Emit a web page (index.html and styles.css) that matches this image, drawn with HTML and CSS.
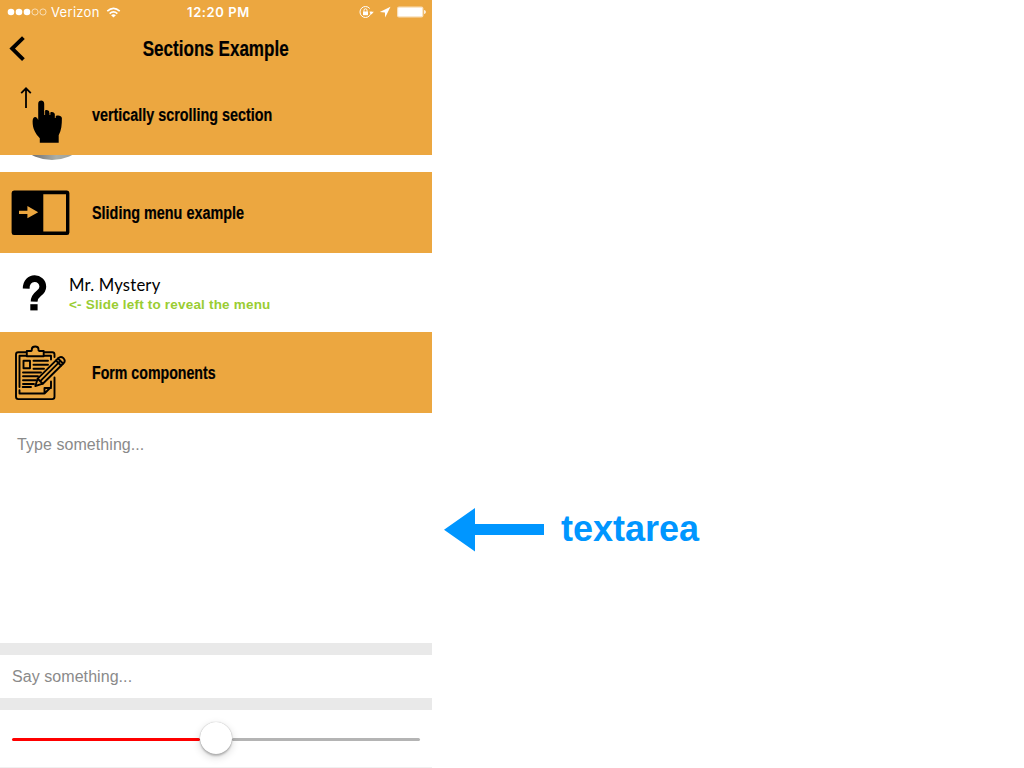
FILE: index.html
```
<!DOCTYPE html>
<html lang="en">
<head>
<meta charset="utf-8">
<title>Sections Example</title>
<link rel="stylesheet" href="styles.css">
</head>
<body>
<div class="page">
  <main class="phone">
    <header class="header">
      <div class="status">
        <div class="carrier">
          <svg width="40" height="10" viewBox="0 0 40 10"><g fill="#fff"><circle cx="4" cy="5" r="3.3"/><circle cx="12" cy="5" r="3.3"/><circle cx="20" cy="5" r="3.3"/></g><g fill="none" stroke="#fff" stroke-width=".6"><circle cx="28" cy="5" r="3.1"/><circle cx="36" cy="5" r="3.1"/></g></svg>
          <span class="carrier-name">Verizon</span>
          <svg class="wifi" width="15" height="11" viewBox="0 0 16 12"><g fill="none" stroke="#fff" stroke-width="1.8"><path d="M1.2 4.6Q8-1.6 14.8 4.6"/><path d="M3.8 7.2Q8 3.4 12.2 7.2"/></g><path d="M5.4 8.9Q8 6.8 10.6 8.9L8 11.4Z" fill="#fff"/></svg>
        </div>
        <span class="clock">12:20 PM</span>
        <svg class="indicators" width="68" height="16" viewBox="0 0 68 16">
          <circle cx="7.5" cy="8" r="5.5" fill="none" stroke="#fff" stroke-width="1" stroke-dasharray="30 3"/>
          <path d="M11.2 7.8h4.6l-2.3 2.6z" fill="#fff"/>
          <path d="M5 7.5h5v3.7H5z" fill="#fff"/><path d="M6 7.8V6.3a1.5 1.5 0 0 1 3 0v1.5" fill="none" stroke="#fff"/>
          <path d="M32.5 2.7L21.8 8.1l5.1.4.3 5.1z" fill="#fff"/>
          <rect x="39" y="2.5" width="26.4" height="11" rx="2" fill="#f8dfb9"/>
          <rect x="40.2" y="3.7" width="24" height="8.6" rx=".8" fill="#fff"/>
          <path d="M66.2 6c2.1.7 2.1 3.3 0 4z" fill="#fff"/>
        </svg>
      </div>
      <div class="navbar">
        <svg class="back" width="18" height="26" viewBox="0 0 18 26"><path d="M15.4 2.6L4.2 13.6l11.2 11" fill="none" stroke="#000" stroke-width="3.9"/></svg>
        <h1 class="title">Sections Example</h1>
      </div>
    </header>

    <section class="section first">
      <svg class="icon" width="70" height="80" viewBox="0 75 70 80">
        <path d="M26 108V89M21.2 93.2L26 88.3l4.8 4.9" fill="none" stroke="#000" stroke-width="1.8"/>
        <path d="M38.2 103.8c0-4.4 6-4.4 6 0v7.8c.5-2.4 5.2-2.2 5.4 1.1v.6c.8-2.2 5.2-1.8 5.4 1.3v2.4c1-2.2 6.8-2 6.9 1.3 0 6-.4 12-3.2 17v7.5H39.8v-4.5c-4-4.3-7.3-9.1-7.2-17 0-4.7 3.9-6 5.6-1.2z" fill="#000"/>
        <path d="M44.6 110v5M49.9 110v5M55.3 112v6" stroke="#eca740" stroke-width=".8"/>
      </svg>
      <h2 class="heading vertical">vertically scrolling section</h2>
    </section>
    <div class="peek"><div class="avatar"></div></div>

    <section class="section sliding">
      <svg class="icon" width="70" height="80" viewBox="0 172.5 70 80">
        <path fill-rule="evenodd" d="M14 190H67Q69.4 190 69.4 192.5V232Q69.4 234.5 67 234.5H14Q11.6 234.5 11.6 232V192.5Q11.6 190 14 190ZM43.3 193.8V231H66V193.8ZM19 210.3V213.5H27.4V217.8L38.2 211.7 27.4 205.6V210.3Z"/>
      </svg>
      <h2 class="heading slide">Sliding menu example</h2>
    </section>

    <div class="row">
      <div class="mystery"><svg width="69" height="46" viewBox="0 269.4 69 46"><path d="M26.2 288C26.3 274.5 42.8 275.7 42.8 286.1C42.8 293.5 34.3 292.2 34.1 301" fill="none" stroke="#000" stroke-width="6.8"/><path d="M30.3 303.6h7.3v6.2h-7.3z"/></svg></div>
      <div class="person">
        <div class="name">Mr. Mystery</div>
        <div class="hint">&lt;- Slide left to reveal the menu</div>
      </div>
    </div>

    <section class="section forms">
      <svg class="icon" width="70" height="80" viewBox="0 332.5 70 80">
        <g fill="none" stroke="#000" stroke-width="1.9" stroke-linejoin="round" stroke-linecap="round">
          <path d="M26 351.7H18.3Q16 351.7 16 354V396.3Q16 398.6 18.3 398.6H52.2Q54.5 398.6 54.5 396.3V377M54.5 356.5V354Q54.5 351.7 52.2 351.7H44.5"/>
          <path d="M26.8 355.8V350.5H31.2C32 350.5 31.8 349 31.8 348.5C32.3 345.2 38.1 345.2 38.5 348.5C38.5 349.5 38.3 350.5 39.3 350.5H43.7V355.8Z"/>
          <path d="M26 355.2H19.5V386.5M19.5 389.7V393H44.5L51 386.5V381M44.5 393V387.5H51M44.5 355.2H51V359"/>
          <path d="M23.5 360.3H30V367.8H23.5ZM33.5 360.3H48M33.5 364.2H48M33.5 368.2H44M23 372H41M23 375.8H38M23 379.7H36M23 383.5H34M22.7 386.5H31"/>
          <path fill="#eca740" d="M35.3 385.5L37.7 378.2L58.3 357.6Q60.8 355.2 63.4 357.6Q66 360.2 63.5 362.8L42.8 383.2Z"/>
          <path d="M37.7 378.2L42.8 383.2M40.3 380.6L59.2 361.6M56 360L61 365M58 358L63 363"/>
        </g>
      </svg>
      <h2 class="heading form">Form components</h2>
    </section>

    <div class="textarea">Type something...</div>
    <div class="divider"></div>
    <div class="input">Say something...</div>
    <div class="divider"></div>
    <div class="slider">
      <div class="track filled"></div>
      <div class="knob"></div>
      <div class="track empty"></div>
    </div>
  </main>

  <aside class="callout">
    <svg width="101" height="44" viewBox="0 0 101 44"><path d="M0 21.7L31 0V16H100V27H31V43.4Z" fill="#0096ff"/></svg>
    <span class="callout-text">textarea</span>
  </aside>
</div>
</body>
</html>
```

FILE: styles.css
```
* { box-sizing: border-box; }
body { margin: 0; background: #fff; font-family: "Liberation Sans", Arial, sans-serif; color: #000; }
svg { display: block; flex: none; }
h1, h2 { margin: 0; }
.page { display: flex; width: 1024px; height: 768px; overflow: hidden; }
.phone { width: 432px; height: 768px; flex: none; display: flex; flex-direction: column; border-bottom: 1px solid #f0f0f0; }
.phone > * { flex: none; }
.header { height: 75px; background: #eca740; }
.status { height: 24px; display: grid; grid-template-columns: 1fr auto 1fr; align-items: center; padding: 0 6px 0 7px; color: #fff; font-family: Inter, sans-serif; }
.carrier { display: flex; align-items: center; }
.carrier-name { font-size: 13px; line-height: 24px; letter-spacing: .3px; margin-left: 4px; width: 50px; white-space: nowrap; }
.wifi { margin-left: 5px; }
.clock { font-size: 13px; font-weight: 600; line-height: 24px; letter-spacing: .6px; margin-left: 4px; }
.indicators { justify-self: end; }
.navbar { height: 48px; display: grid; grid-template-columns: 60px 1fr 60px; align-items: center; }
.back { margin-left: 8px; }
.title { font-size: 21.5px; line-height: 28px; padding-top: 1px; text-align: center; transform: translateX(-.3px) scaleX(.793); white-space: nowrap; -webkit-text-stroke: .2px #000; }
.section { background: #eca740; display: flex; align-items: center; }
.icon { margin-right: 22px; }
.heading { font-size: 18px; line-height: 24px; padding-top: 1px; white-space: nowrap; transform-origin: left center; -webkit-text-stroke: .2px #000; }
.vertical { padding-top: 0; transform: scaleX(.797); }
.slide { transform: scaleX(.8); }
.form { transform: scaleX(.787); }
.first { height: 80px; }
.peek { height: 17.4px; padding-left: 9px; overflow: hidden; display: flex; align-items: flex-start; }
.avatar { width: 86px; height: 86px; flex: none; margin-top: -81px; border-radius: 50%; background: linear-gradient(90deg, #777 30%, #aaaea7 55%, #8b8c88); }
.sliding { height: 80.6px; }
.row { height: 79.5px; display: flex; align-items: center; }
.mystery { width: 69px; }
.person { padding-top: 2px; }
.name { font-family: Lato, sans-serif; font-size: 17px; line-height: 21px; transform: scaleX(.98); transform-origin: left center; letter-spacing: .2px; }
.hint { font-size: 13.5px; line-height: 19px; font-weight: 700; letter-spacing: .19px; color: #9acd32; white-space: nowrap; }
.forms { height: 80.7px; }
.textarea { height: 230px; padding: 23px 17px; font-size: 16px; line-height: 18px; letter-spacing: .06px; color: #8a8a8a; }
.divider { height: 11.8px; background: #e9e9e9; }
.input { height: 43px; padding-left: 12px; font-size: 16px; line-height: 43px; letter-spacing: .06px; color: #8a8a8a; }
.slider { height: 57px; padding: 0 12px; display: flex; align-items: center; }
.track { height: 2.6px; margin-top: 3px; border-radius: 2px; }
.filled { width: 188px; background: #f00; }
.empty { flex: 1; background: #b4b4b4; }
.knob { width: 32px; height: 32px; border-radius: 50%; background: #fff; box-shadow: 0 0 1px rgba(0,0,0,.35), 0 2px 2px rgba(0,0,0,.2), 0 3px 8px rgba(0,0,0,.16); z-index: 1; }
.callout { display: flex; align-items: center; height: 44px; margin: 508px 0 0 12px; }
.callout-text { color: #0096ff; font-size: 36px; line-height: 44px; padding-bottom: 3px; font-weight: 700; margin-left: 16px; }
```
